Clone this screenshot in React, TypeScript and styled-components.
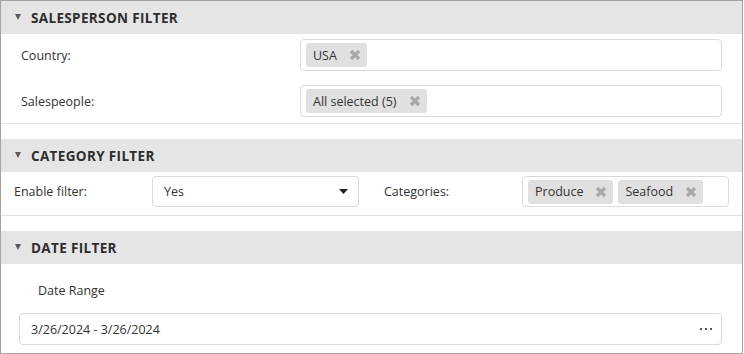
import React from "react";
import styled, { createGlobalStyle } from "styled-components";

const GlobalStyle = createGlobalStyle`
  html, body { margin: 0; padding: 0; background: #fff; }
  body { font-family: "Open Sans", "Noto Sans", Arial, sans-serif; color: #333; }
  * { box-sizing: border-box; }
`;

const Frame = styled.div`
  width: 743px;
  height: 354px;
  border: 1px solid #a3a3a3;
  display: flex;
  flex-direction: column;
  gap: 15px;
  overflow: hidden;
`;

const Section = styled.section`
  display: flex;
  flex-direction: column;
`;

const Header = styled.div`
  height: 33px;
  background: #e5e5e5;
  display: flex;
  align-items: center;
  padding-left: 14px;
  gap: 10px;
  font-size: 13.5px;
  font-weight: 700;
  color: #2e2e2e;
  letter-spacing: 0.35px;
`;

const Caret = styled.span`
  width: 0;
  height: 0;
  border-left: 3.5px solid transparent;
  border-right: 3.5px solid transparent;
  border-top: 6px solid #5a5a5a;
  margin-top: -2px;
`;

const Body = styled.div<{ $pad: string; $gap?: number; $sep?: boolean }>`
  display: flex;
  flex-direction: column;
  gap: ${(p) => p.$gap ?? 0}px;
  padding: ${(p) => p.$pad};
  border-bottom: ${(p) => (p.$sep ? "1px solid #e0e0e0" : "none")};
`;

const FieldRow = styled.div`
  display: grid;
  grid-template-columns: 279px 1fr;
  align-items: center;
`;

const Label = styled.span<{ $indent?: number }>`
  font-size: 12.5px;
  color: #333;
  padding-left: ${(p) => p.$indent ?? 0}px;
`;

const PairRow = styled.div`
  display: flex;
  gap: 25px;
`;

const Pair = styled.div`
  display: grid;
  grid-template-columns: 138px 207px;
  align-items: center;
`;

const Editor = styled.div<{ $h?: number }>`
  height: ${(p) => p.$h ?? 32}px;
  border: 1px solid #dadada;
  border-radius: 4px;
  background: #fff;
  display: flex;
  align-items: center;
  font-size: 12.5px;
  color: #333;
`;

const TagBox = styled(Editor)`
  padding: 0 5px;
  gap: 5px;
`;

const TextEditor = styled(Editor)`
  padding: 0 10px 0 11px;
  justify-content: space-between;
`;

const Chip = styled.span`
  height: 24px;
  background: #e0e0e0;
  border-radius: 3px;
  display: inline-flex;
  align-items: center;
  padding: 0 6px 0 7px;
  gap: 12px;
  font-size: 12.5px;
  color: #333;
  white-space: nowrap;
`;

const Dots = styled.span`
  display: flex;
  gap: 3px;
  margin-right: -1px;
  & > i {
    width: 2px;
    height: 2px;
    background: #555;
    display: block;
  }
`;

const RemoveIcon = () => (
  <svg width="12" height="12" viewBox="0 0 12 12" aria-hidden>
    <path d="M2 2 L10 10 M10 2 L2 10" stroke="#a8a8a8" strokeWidth="3.2" strokeLinecap="butt" />
  </svg>
);

const DropArrow = () => (
  <svg width="9" height="5" viewBox="0 0 9 5" aria-hidden>
    <path d="M0 0 H9 L4.5 5 Z" fill="#222" />
  </svg>
);

const Tag = ({ text }: { text: string }) => (
  <Chip>
    {text}
    <RemoveIcon />
  </Chip>
);

export default function App() {
  return (
    <>
      <GlobalStyle />
      <Frame>
        <Section>
          <Header>
            <Caret />
            SALESPERSON FILTER
          </Header>
          <Body $pad="5px 20px 6px 20px" $gap={14} $sep>
            <FieldRow>
              <Label>Country:</Label>
              <TagBox>
                <Tag text="USA" />
              </TagBox>
            </FieldRow>
            <FieldRow>
              <Label>Salespeople:</Label>
              <TagBox>
                <Tag text="All selected (5)" />
              </TagBox>
            </FieldRow>
          </Body>
        </Section>
        <Section>
          <Header>
            <Caret />
            CATEGORY FILTER
          </Header>
          <Body $pad="4px 13px 8px 13px" $sep>
            <PairRow>
              <Pair>
                <Label>Enable filter:</Label>
                <TextEditor $h={31}>
                  Yes
                  <DropArrow />
                </TextEditor>
              </Pair>
              <Pair>
                <Label>Categories:</Label>
                <TagBox $h={31}>
                  <Tag text="Produce" />
                  <Tag text="Seafood" />
                </TagBox>
              </Pair>
            </PairRow>
          </Body>
        </Section>
        <Section>
          <Header>
            <Caret />
            DATE FILTER
          </Header>
          <Body $pad="18px 20px 0 18px" $gap={14}>
            <Label $indent={19}>Date Range</Label>
            <TextEditor $h={32}>
              3/26/2024 - 3/26/2024
              <Dots>
                <i />
                <i />
                <i />
              </Dots>
            </TextEditor>
          </Body>
        </Section>
      </Frame>
    </>
  );
}
